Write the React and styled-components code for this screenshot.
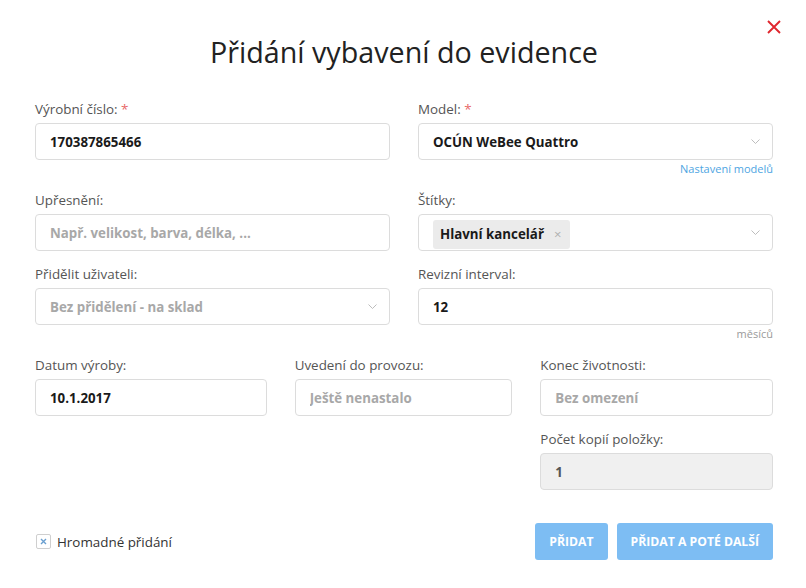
import styled, { createGlobalStyle } from 'styled-components';

const GlobalStyle = createGlobalStyle`
  * {
    box-sizing: border-box;
  }

  body {
    margin: 0;
    background: #fff;
    font-family: 'Open Sans', 'Liberation Sans', sans-serif;
    color: #333;
  }
`;

const Chevron = () => (
  <svg width="9" height="5" viewBox="0 0 9 5" fill="none">
    <path d="M0.5 0.5L4.5 4.5L8.5 0.5" stroke="#b5b5b5" strokeWidth="0.9" />
  </svg>
);

const Field = ({ label, required, value, placeholder, select, disabled, helper, link, children }) => (
  <Group>
    <Label>
      {label}
      {required && <Star> *</Star>}
    </Label>
    <Control disabled={disabled}>
      {children ? (
        children
      ) : (
        <Value muted={!value}>{value || placeholder}</Value>
      )}
      {select && <Chevron />}
    </Control>
    {helper && <Helper link={link}>{helper}</Helper>}
  </Group>
);

const App = () => {
  return (
    <>
      <GlobalStyle />
      <Modal>
        <Close aria-label="Zavřít">
          <svg width="14" height="14" viewBox="0 0 14 14">
            <path d="M1 1L13 13M13 1L1 13" stroke="#e0262e" strokeWidth="1.9" />
          </svg>
        </Close>

        <Title>Přidání vybavení do evidence</Title>

        <TwoCols>
          <Field label="Výrobní číslo:" required value="170387865466" />
          <Field
            label="Model:"
            required
            value="OCÚN WeBee Quattro"
            select
            helper="Nastavení modelů"
            link
          />

          <Field label="Upřesnění:" placeholder="Např. velikost, barva, délka, ..." />
          <Field label="Štítky:" select>
            <Tags>
              <Tag>
                Hlavní kancelář
                <TagRemove>×</TagRemove>
              </Tag>
            </Tags>
          </Field>

          <Field label="Přidělit uživateli:" placeholder="Bez přidělení - na sklad" select />
          <Field label="Revizní interval:" value="12" helper="měsíců" />
        </TwoCols>

        <ThreeCols>
          <Field label="Datum výroby:" value="10.1.2017" />
          <Field label="Uvedení do provozu:" placeholder="Ještě nenastalo" />
          <div>
            <Field label="Konec životnosti:" placeholder="Bez omezení" />
            <Field label="Počet kopií položky:" value="1" disabled />
          </div>
        </ThreeCols>

        <Footer>
          <CheckLabel>
            <CheckBox>
              <svg width="7" height="7" viewBox="0 0 7 7">
                <path d="M1 1L6 6M6 1L1 6" stroke="#6a9fd0" strokeWidth="1.4" />
              </svg>
            </CheckBox>
            Hromadné přidání
          </CheckLabel>

          <Buttons>
            <Button>Přidat</Button>
            <Button>Přidat a poté další</Button>
          </Buttons>
        </Footer>
      </Modal>
    </>
  );
};

const Modal = styled.div`
  position: relative;
  width: 806px;
  min-height: 588px;
  padding: 35px 33px 0 35px;
`;

const Close = styled.button`
  position: absolute;
  top: 20px;
  right: 25px;
  padding: 0;
  border: 0;
  background: none;
  display: flex;
  cursor: pointer;
`;

const Title = styled.h1`
  margin: 0 0 30px;
  font-size: 28.7px;
  line-height: 34px;
  font-weight: 400;
  color: #222;
  text-align: center;
`;

const TwoCols = styled.div`
  display: grid;
  grid-template-columns: 1fr 1fr;
  column-gap: 28px;
  align-items: start;
`;

const ThreeCols = styled.div`
  display: grid;
  grid-template-columns: 232fr 218fr 233fr;
  column-gap: 28px;
  align-items: start;
`;

const Group = styled.div`
  margin-bottom: 13px;
`;

const Label = styled.div`
  font-size: 13.4px;
  line-height: 20px;
  color: #555;
  margin-bottom: 4px;
`;

const Star = styled.span`
  color: #e86a6a;
`;

const Control = styled.div`
  height: 37px;
  display: flex;
  align-items: center;
  gap: 10px;
  padding: 0 12px 0 14px;
  border: 1px solid #dcdcdc;
  border-radius: 4px;
  background: ${({ disabled }) => (disabled ? '#f0f0f0' : '#fff')};
  color: ${({ disabled }) => (disabled ? '#555' : '#1a1a1a')};
`;

const Value = styled.div`
  flex: 1;
  font-size: 13.3px;
  font-weight: 700;
  color: ${({ muted }) => (muted ? '#a8a8a8' : 'inherit')};
  white-space: nowrap;
  overflow: hidden;
`;

const Helper = styled.div`
  height: 17px;
  font-size: 11px;
  line-height: 17px;
  text-align: right;
  color: ${({ link }) => (link ? '#4ea5e2' : '#9a9a9a')};
`;

const Tags = styled.div`
  flex: 1;
  display: flex;
  padding-top: 3px;
`;

const Tag = styled.span`
  display: inline-flex;
  align-items: center;
  gap: 10px;
  height: 29px;
  padding: 0 9px 0 7px;
  border-radius: 3px;
  background: #ebebeb;
  font-size: 13.3px;
  font-weight: 700;
  color: #1a1a1a;
`;

const TagRemove = styled.span`
  font-size: 13px;
  font-weight: 400;
  color: #b0b0b0;
`;

const Footer = styled.div`
  display: flex;
  align-items: center;
  justify-content: space-between;
  margin-top: 20px;
`;

const CheckLabel = styled.label`
  display: flex;
  align-items: center;
  gap: 6px;
  font-size: 13.4px;
  color: #333;
  padding-left: 1px;
`;

const CheckBox = styled.span`
  width: 15px;
  height: 15px;
  display: flex;
  align-items: center;
  justify-content: center;
  border: 1px solid #cfcfcf;
  border-radius: 2px;
  background: #fff;
`;

const Buttons = styled.div`
  display: flex;
  gap: 9px;
`;

const Button = styled.button`
  height: 37px;
  padding: 0 14px;
  border: 0;
  border-radius: 3px;
  background: #7dbdf3;
  color: #fff;
  font-family: 'Open Sans', 'Liberation Sans', sans-serif;
  font-size: 12.2px;
  font-weight: 700;
  text-transform: uppercase;
  cursor: pointer;
`;

export default App;
